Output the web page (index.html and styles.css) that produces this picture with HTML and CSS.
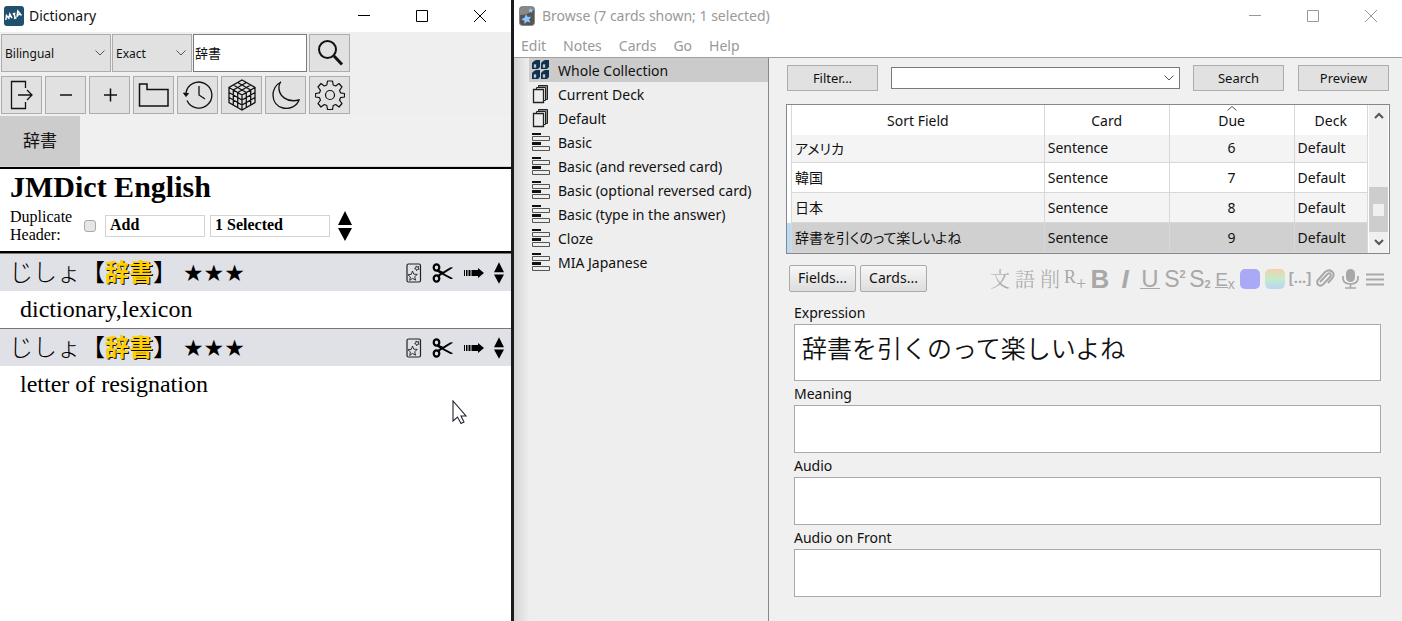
FILE: index.html
```html
<!DOCTYPE html>
<html lang="en">
<head>
<meta charset="utf-8">
<title>Dictionary and card browser</title>
<link rel="stylesheet" href="styles.css">
</head>
<body>
<svg class="defs" aria-hidden="true">
  <symbol id="chevron" viewBox="0 0 10 6"><path d="M.5.5 5 5 9.5.5" fill="none" stroke="#555"/></symbol>
  <symbol id="deck" viewBox="0 0 20 20"><g fill="#eee" stroke="#222"><path d="M7.500 1.500h9v14h-9z" fill="#888"/><path d="M5.500 3.500h9v13h-9z"/><path d="M2.500 5.500h10v13h-10z" stroke-width="1.300"/></g></symbol>
  <symbol id="note" viewBox="0 0 20 20"><path d="M1 1h9v2H1zM1 10h9v3H1z" fill="#111"/><path d="M1.500 4.500h17v4h-17zM1.500 14.500h17v4h-17z" fill="#eee" stroke="#555"/></symbol>
  <symbol id="card" viewBox="0 0 16 20"><rect x="1" y="1" width="13.500" height="18" rx="1.500" fill="none" stroke="#222" stroke-width="1.200"/><path d="m6.500 8 1.300 3.200 3.500.2-2.600 2.300.9 3.500-3-1.800-2.900 2 .7-3.500-2.500-2.200 3.400-.4zM10 3l1.200 1 1.500-.6-.5 1.600 1 1.200-1.700.1-.9 1.400-.5-1.600-1.500-.5 1.400-.9z" fill="none" stroke="#222" stroke-width=".9"/></symbol>
  <symbol id="scissors" viewBox="0 0 22 20"><g fill="none" stroke="#000" stroke-width="2.200"><ellipse cx="4.500" cy="4.500" rx="2.800" ry="3.200"/><ellipse cx="4.500" cy="15.500" rx="2.800" ry="3.200"/></g><path d="m6 6.500 5 2.200 7-4.200q2-.8 3 .2l-9 5.800 9 4.800q-1 1.200-3 .5l-8-4.300-4 3-1-2 3-2-3-2z"/></symbol>
  <symbol id="arrow" viewBox="0 0 20 10"><path d="M0 2h1v6H0zM2 2h1.500v6H2zM4.500 2h2v6h-2zM7.500 2H14V0l6 5-6 5V8H7.500z"/></symbol>
  <symbol id="updown" viewBox="0 0 14 30"><path d="M7 0l7 14H0zM0 17h14L7 30z"/></symbol>
</svg>

<main class="desktop">
  <section class="dictionary">
    <header class="titlebar">
      <svg class="app-icon" width="20" height="20" viewBox="0 0 20 20"><rect width="20" height="20" rx="3" fill="#21506f"/><path d="m1.800 14 .7-4.500 2.300 2.700 1-4.200 2.200 4.200M10 7.500l1.200 4.500M8.800 8l2.500-.8M10 12.500l2.500-.8M13 11l.8-6 3.700 4.500M13.500 9l3-1" fill="none" stroke="#fff" stroke-width="1.500"/></svg>
      <h1 class="window-title">Dictionary</h1>
      <div class="window-controls">
        <button aria-label="Minimize"><svg width="12" height="12"><path d="M0 5.500h12"/></svg></button>
        <button aria-label="Maximize"><svg width="12" height="12"><path d="M.5.5h11v11H.5z"/></svg></button>
        <button aria-label="Close"><svg width="12" height="12"><path d="m0 0 12 12M12 0 0 12"/></svg></button>
      </div>
    </header>

    <div class="tools">
      <div class="search-row">
        <div class="select-wrap language"><select aria-label="Dictionary group"><option>Bilingual</option></select><svg width="10" height="6"><use href="#chevron"/></svg></div>
        <div class="select-wrap mode"><select aria-label="Search mode"><option>Exact</option></select><svg width="10" height="6"><use href="#chevron"/></svg></div>
        <input class="term" aria-label="Search term" value="辞書">
        <button class="tool" aria-label="Search"><svg width="30" height="30" viewBox="0 0 30 30"><circle cx="12.500" cy="11.500" r="8.500" stroke-width="2"/><path d="m19 18 8 8.500" stroke-width="3"/></svg></button>
      </div>
      <div class="button-row">
        <button class="tool" aria-label="Open sidebar"><svg width="30" height="30" viewBox="0 0 30 30"><path d="M18.500 8V1.500H4.500v27h14V22M11 15h14M20 10l5 5-5 5" stroke-width="1.300"/></svg></button>
        <button class="tool" aria-label="Smaller text"><svg width="30" height="30" viewBox="0 0 30 30"><path d="M9 15h12" stroke-width="1.500"/></svg></button>
        <button class="tool" aria-label="Larger text"><svg width="30" height="30" viewBox="0 0 30 30"><path d="M9 15h13M15.500 8.500v13" stroke-width="1.500"/></svg></button>
        <button class="tool" aria-label="Files"><svg width="32" height="30" viewBox="0 0 32 30"><path d="M1.500 26V4H9v5.500h21V26z" stroke-width="1.500"/></svg></button>
        <button class="tool" aria-label="History"><svg width="32" height="30" viewBox="0 0 32 30"><path d="M4 13A13 13 0 1 1 5 20.500M17 6v9l6 4" stroke-width="1.300"/><path d="m1.500 13 5 .5-2.500 3z" fill="#111"/></svg></button>
        <button class="tool" aria-label="Card builder"><svg width="30" height="32" viewBox="0 0 30 32"><path d="m15 1 13 7.500v15L15 31 2 23.500v-15zM2 8.500 15 16l13-7.500M15 16v15M6.300 11v15M10.700 13.500v15M19.300 13.500v15M23.700 11v15M2 13.500 15 21l13-7.500M2 18.500 15 26l13-7.500M6.300 6l13 7.500M10.700 3.500l13 7.500M23.700 6l-13 7.500M19.300 3.500l-13 7.500" stroke-width="1.300"/></svg></button>
        <button class="tool" aria-label="Night mode"><svg width="30" height="30" viewBox="0 0 30 30"><path d="M10 2C-1 7-1 25 12 28c7 1.500 14-2 16-8C16 23 7 16 8 6q.5-3 2-4z" stroke-width="1.300"/></svg></button>
        <button class="tool" aria-label="Settings"><svg width="30" height="30" viewBox="0 0 30 30"><circle cx="15" cy="15" r="4.500" stroke-width="1.200"/><path d="M12.500 1h5l.7 4 2.500 1 3.300-2.500L27 7l-2.500 3.300 1 2.500 4 .7v3.500l-4 .7-1 2.500L27 23.500 24 27l-3.300-2.500-2.500 1-.7 4h-5l-.7-4-2.500-1L6 27l-3-3.500 2.500-3.300-1-2.500-4-.7v-3.500l4-.7 1-2.500L3 7l3-3.500L9.300 6l2.500-1z" stroke-width="1.200" stroke-linejoin="round"/></svg></button>
      </div>
    </div>
    <nav class="tabs"><button class="tab">辞書</button></nav>

    <div class="results">
      <div class="source">
        <h2>JMDict English</h2>
        <div class="source-options">
          <label for="duplicate">Duplicate Header:</label>
          <input id="duplicate" type="checkbox">
          <button class="pick add">Add</button>
          <button class="pick selected">1 Selected</button>
          <svg class="jump" width="14" height="30"><use href="#updown"/></svg>
        </div>
      </div>
      <article class="entry">
        <header><span class="reading">じしょ【<b>辞書</b>】</span><span class="stars">★★★</span>
          <span class="actions"><svg width="16" height="20"><use href="#card"/></svg><svg width="22" height="20"><use href="#scissors"/></svg><svg width="20" height="10"><use href="#arrow"/></svg><svg width="10" height="22"><use href="#updown"/></svg></span></header>
        <p>dictionary,lexicon</p>
      </article>
      <article class="entry">
        <header><span class="reading">じしょ【<b>辞書</b>】</span><span class="stars">★★★</span>
          <span class="actions"><svg width="16" height="20"><use href="#card"/></svg><svg width="22" height="20"><use href="#scissors"/></svg><svg width="20" height="10"><use href="#arrow"/></svg><svg width="10" height="22"><use href="#updown"/></svg></span></header>
        <p>letter of resignation</p>
      </article>
      <svg class="pointer" width="16" height="24" viewBox="0 0 16 24"><path d="M1 1v20l4.500-4 3.500 6.500 3-1.500-3-6h5z" fill="#fff" stroke="#223" stroke-width="1.100"/></svg>
    </div>
  </section>

  <section class="browser">
    <header class="titlebar inactive">
      <svg class="app-icon" width="16" height="20" viewBox="0 0 16 20"><rect x=".5" y=".5" width="15" height="19" rx="3" fill="#555" stroke="#888"/><path d="M1 9Q8 9 15 4V3q0-2-2-2H3Q1 1 1 3z" fill="#888"/><path d="m7 8 1.600 3 3.400-.3-2 2.800 1.500 3-3.500-.9-2.400 2.400-.3-3.300-3-1.500 3.200-1.500zM11.500 2l.8 1.500 1.700.2-1 1.300.3 1.700-1.600-.8-1.500.7.200-1.700-1-1.200 1.600-.3z" fill="#8ccaff"/></svg>
      <h1 class="window-title">Browse (7 cards shown; 1 selected)</h1>
      <div class="window-controls">
        <button aria-label="Minimize"><svg width="12" height="12"><path d="M0 5.500h12"/></svg></button>
        <button aria-label="Maximize"><svg width="12" height="12"><path d="M.5.5h11v11H.5z"/></svg></button>
        <button aria-label="Close"><svg width="12" height="12"><path d="m0 0 12 12M12 0 0 12"/></svg></button>
      </div>
    </header>
    <nav class="menubar"><a href="#">Edit</a><a href="#">Notes</a><a href="#">Cards</a><a href="#">Go</a><a href="#">Help</a></nav>

    <div class="workspace">
      <aside class="sidebar">
        <ul>
          <li class="current"><svg width="20" height="20" viewBox="0 0 20 20"><g fill="#12314c"><path d="m3 1 2-1h4v7L7 9H1V3zM12 1l2-1h4v7l-2 2h-6V3zM3 11l2-1h4v7l-2 2H1v-6zM12 11l2-1h4v7l-2 2h-6v-6z"/></g><path d="M2.500 4h3v4h-3zM11.500 4h3v4h-3zM2.500 14h3v4h-3zM11.500 14h3v4h-3z" fill="#b9ccdc" stroke="#12314c" stroke-width=".7"/></svg><span>Whole Collection</span></li>
          <li><svg width="20" height="20"><use href="#deck"/></svg><span>Current Deck</span></li>
          <li><svg width="20" height="20"><use href="#deck"/></svg><span>Default</span></li>
          <li><svg width="20" height="20"><use href="#note"/></svg><span>Basic</span></li>
          <li><svg width="20" height="20"><use href="#note"/></svg><span>Basic (and reversed card)</span></li>
          <li><svg width="20" height="20"><use href="#note"/></svg><span>Basic (optional reversed card)</span></li>
          <li><svg width="20" height="20"><use href="#note"/></svg><span>Basic (type in the answer)</span></li>
          <li><svg width="20" height="20"><use href="#note"/></svg><span>Cloze</span></li>
          <li><svg width="20" height="20"><use href="#note"/></svg><span>MIA Japanese</span></li>
        </ul>
      </aside>

      <div class="content">
        <div class="filter-row">
          <button class="push">Filter...</button>
          <div class="select-wrap query"><select aria-label="Search query"><option></option></select><svg width="10" height="6"><use href="#chevron"/></svg></div>
          <button class="push">Search</button>
          <button class="push preview">Preview</button>
        </div>

        <div class="card-list">
          <table>
            <colgroup><col class="c-mark"><col class="c-sort"><col class="c-card"><col class="c-due"><col class="c-deck"></colgroup>
            <thead><tr><th></th><th>Sort Field</th><th>Card</th><th class="sorted">Due<svg width="10" height="5" viewBox="0 0 10 5"><path d="M.5 4.500 5 .5l4.500 4" fill="none" stroke="#555"/></svg></th><th>Deck</th></tr></thead>
            <tbody>
              <tr class="partial"><td></td><td class="ja">アメリカ</td><td>Sentence</td><td class="num">6</td><td>Default</td></tr>
              <tr><td></td><td class="ja">韓国</td><td>Sentence</td><td class="num">7</td><td>Default</td></tr>
              <tr><td></td><td class="ja">日本</td><td>Sentence</td><td class="num">8</td><td>Default</td></tr>
              <tr class="chosen"><td></td><td class="ja">辞書を引くのって楽しいよね</td><td>Sentence</td><td class="num">9</td><td>Default</td></tr>
            </tbody>
          </table>
          <div class="scrollbar">
            <svg width="10" height="7" viewBox="0 0 10 7"><path d="m1 6 4-4 4 4"/></svg>
            <div class="track"><div class="thumb"></div></div>
            <svg width="10" height="7" viewBox="0 0 10 7"><path d="m1 1 4 4 4-4"/></svg>
          </div>
        </div>

        <div class="editor-bar">
          <button class="soft">Fields...</button><button class="soft">Cards...</button>
          <div class="format">
            <button class="kanji">文</button><button class="kanji">語</button><button class="kanji">削</button>
            <button class="furi">R<sub>+</sub></button>
            <button class="bold">B</button><button class="italic">I</button><button class="under">U</button>
            <button class="script">S<sup>2</sup></button><button class="script">S<sub>2</sub></button><button class="script clear"><span>E</span><sub>x</sub></button>
            <button class="swatch" aria-label="Text colour"></button><button class="swatch rainbow" aria-label="Change colour"></button>
            <button class="cloze">[...]</button>
            <button aria-label="Attach"><svg width="20" height="20" viewBox="0 0 20 20"><path d="m5 13 7.500-8q2-1.500 3 0t-.5 3L8 15.500q-2.500 2-4.500.5t-1-4.500L10 3q4-3 7-.5t.5 6.500L13 14" stroke-width="2"/></svg></button>
            <button aria-label="Record"><svg width="20" height="20" viewBox="0 0 20 20"><rect x="6" y="0" width="9" height="13" rx="4.500" fill="#a8a8a8" stroke="none"/><path d="M3 7v3q1 5 7.500 5T18 10V7M10.500 15v4M5 19h11" stroke-width="1.700"/></svg></button>
            <button aria-label="More"><svg width="20" height="20" viewBox="0 0 20 20"><path d="M1 5.500h18M1 10.500h18M1 15.500h18" stroke-width="2"/></svg></button>
          </div>
        </div>

        <form class="fields">
          <label for="expression">Expression</label><input id="expression" class="large" value="辞書を引くのって楽しいよね">
          <label for="meaning">Meaning</label><input id="meaning">
          <label for="audio">Audio</label><input id="audio">
          <label for="front">Audio on Front</label><input id="front">
        </form>
      </div>
    </div>
  </section>
</main>
</body>
</html>
```
FILE: styles.css
```css
* { box-sizing: border-box; }
body {
  margin: 0;
  background: #f0f0f0;
  color: #111;
  font: 14px/20px "Noto Sans", "Noto Sans CJK JP", sans-serif;
}
button, input, select { margin: 0; color: inherit; font: inherit; border-radius: 0; }
button { padding: 0; }
svg { display: block; flex: none; }
h1, h2, p, ul { margin: 0; padding: 0; }
.defs { position: absolute; width: 0; height: 0; }

.desktop { display: grid; grid-template-columns: 514fr 888fr; min-height: 100vh; }
.dictionary { display: flex; flex-direction: column; min-width: 0; border-right: 3px solid #1b1b1e; }
.browser { display: flex; flex-direction: column; min-width: 0; }

/* Window frames */
.titlebar { display: flex; align-items: center; height: 32px; padding: 0 2px 0 4px; background: #fff; }
.window-title { margin-left: 5px; font-size: 14px; font-weight: 400; white-space: nowrap; }
.window-controls { display: flex; margin-left: auto; }
.window-controls button { display: grid; place-items: center; width: 58px; height: 32px; border: 0; background: none; }
.window-controls path { fill: none; stroke: #000; }
.inactive { padding-left: 5px; color: #999; }
.inactive .window-title { margin-left: 7px; }
.inactive .window-controls path { stroke: #999; }

/* Dictionary toolbar */
.tools { display: grid; gap: 4px; padding: 2px 1px; background: #efefef; }
.search-row { display: flex; gap: 1px; }
.button-row { display: flex; gap: 3px; }
.select-wrap { display: grid; align-items: center; }
.select-wrap select, .select-wrap svg { grid-area: 1 / 1; }
.select-wrap svg { justify-self: end; margin-right: 6px; pointer-events: none; }
.select-wrap select { width: 100%; height: 38px; padding: 2px 3px 0; border: 1px solid #adadad; background: #e1e1e1; font-size: 12px; appearance: none; }
.language { width: 110px; }
.mode { width: 80px; }
.term { width: 114px; height: 38px; padding: 0 1px 2px; border: 1px solid #7a7a7a; background: #fff; font-size: 13px; }
.tool { display: grid; place-items: center; width: 41px; height: 38px; border: 1px solid #adadad; background: #e1e1e1; }
.tool svg { fill: none; stroke: #111; }
.search-row .tool { margin-left: 1px; }
.tabs { height: 51px; border-bottom: 1px solid #d9d9d9; }
.tab { width: 80px; height: 50px; border: 0; background: #ccc; font-size: 17px; }

/* Dictionary results */
.results { position: relative; flex: 1; background: #fff; color: #000; font-family: "Liberation Serif", "Noto Sans CJK JP", serif; }
.source { height: 86px; padding: 1px 10px 0; border-top: 2px solid #000; border-bottom: 2px solid #000; }
.source h2 { font-size: 30px; line-height: 33px; }
.source-options { display: flex; align-items: center; height: 46px; }
.source-options label { width: 74px; font-size: 16px; line-height: 18px; }
.source-options input { width: 12px; height: 12px; border: 1px solid #aaa; border-radius: 3px; background: #e6e6e6; appearance: none; }
.pick { height: 22px; padding: 0 4px 2px; border: 1px solid #d3d3d3; background: #fff; font-size: 16px; font-weight: 700; line-height: 18px; text-align: left; }
.add { width: 100px; margin-left: 9px; }
.selected { width: 120px; margin-left: 5px; }
.jump { margin-left: 8px; }
.entry { border-top: 1px solid #777; }
.entry header { display: flex; align-items: center; height: 37px; padding: 0 7px 0 9px; background: #e0e1e6; line-height: 36px; }
.reading { padding-bottom: 4px; font-family: "Noto Sans CJK JP", sans-serif; font-size: 24px; line-height: 32px; font-weight: 300; }
.reading b { color: #ffd000; font-weight: 700; text-shadow: 1px 1px #000; }
.stars { margin-left: 6px; font: 23px/36px "DejaVu Sans", sans-serif; }
.actions { display: flex; align-items: center; gap: 10px; margin-left: auto; }
.entry p { height: 37px; padding-left: 20px; font-size: 24px; line-height: 37px; }
.pointer { position: absolute; left: 452px; top: 233px; }

/* Browser */
.menubar { display: flex; gap: 17px; height: 26px; padding: 4px 7px 0; border-bottom: 1px solid #a0a0a0; background: #fff; }
.menubar a { color: #999; text-decoration: none; }
.workspace { display: grid; grid-template-columns: 255px 1fr; flex: 1; }
.sidebar { padding-left: 15px; border-right: 1px solid #828790; background: linear-gradient(90deg, #d4d4d4, #eee 15px); }
.sidebar ul { list-style: none; }
.sidebar li { display: flex; align-items: center; gap: 7px; height: 24px; padding-left: 2px; white-space: nowrap; }
.sidebar span { padding-top: 2px; }
.sidebar .current { background: #cbcbcb; }
.content { min-width: 0; padding: 7px 12px 0 17px; }

.filter-row { display: flex; align-items: center; padding: 0 1px; }
.push { width: 91px; height: 26px; border: 1px solid #adadad; background: #e1e1e1; font-size: 13px; }
.query { flex: 1; margin: 0 13px; }
.query select { height: 22px; border-color: #7a7a7a; background: #fff; }
.preview { margin-left: 14px; }

.card-list { display: flex; height: 150px; margin-top: 13px; overflow: hidden; border: 1px solid #828790; background: #fff; }
table { flex: 1; table-layout: fixed; border-collapse: separate; border-spacing: 0; }
.c-mark { width: 5px; }
.c-sort { width: 43.5%; }
.c-card, .c-due { width: 21.5%; }
th, td { height: 30px; padding: 0 3px; border-right: 1px solid #d8d8d8; border-bottom: 1px solid #d8d8d8; white-space: nowrap; overflow: hidden; }
th { padding-top: 2px; border-bottom: 0; font-weight: 400; }
td { text-align: left; }
.partial td { height: 28px; padding-bottom: 2px; }
td:first-child { border-bottom: 0; padding: 0; }
th:first-child { padding: 0; }
tr:nth-child(odd) td:not(:first-child) { background: #f4f4f4; }
tr.chosen td:not(:first-child) { background: #d0d0d0; }
.chosen td:first-child { background: #b9dcf5; }
.sorted { position: relative; }
.sorted svg { position: absolute; top: 1px; left: 50%; margin-left: -5px; }
.num { text-align: center; }
td.ja { padding-bottom: 2px; font: 14px/20px "Noto Sans CJK JP", sans-serif; font-feature-settings: "palt"; }
.scrollbar { display: flex; flex-direction: column; align-items: center; width: 19px; margin: 0 1px; padding: 7px 0; background: #f0f0f0; }
.scrollbar path { fill: none; stroke: #555; stroke-width: 2; }
.track { display: flex; align-items: flex-end; flex: 1; width: 100%; padding-bottom: 7px; }
.thumb { width: 100%; height: 45px; border: solid #cdcdcd; border-width: 17px 4px 16px; background: #f0f0f0; }

.editor-bar { display: flex; align-items: center; gap: 4px; height: 50px; padding: 0 5px 2px 3px; }
.soft { width: 67px; height: 27px; border: 1px solid #aaa; border-radius: 2px; background: linear-gradient(#f7f7f7, #ddd); }
.format { display: flex; gap: 5px; margin-left: auto; padding-top: 2px; }
.format button { display: flex; align-items: center; justify-content: center; width: 20px; height: 20px; border: 0; background: none; color: #a8a8a8; white-space: nowrap; }
.format svg { fill: none; stroke: #a8a8a8; }
.format sub, .format sup { font-size: 12px; line-height: 10px; }
.format sub { align-self: flex-end; }
.format sup { align-self: flex-start; }
.format .kanji { font: 20px/20px "Noto Serif CJK JP", "Noto Sans CJK JP", sans-serif; font-weight: 300; }
.format .furi { align-items: flex-start; font: 18px/16px "Liberation Serif", serif; }
.format .furi sub { font-size: 18px; }
.format .bold { font: 700 26px/20px "Liberation Sans", sans-serif; }
.format .italic { font: italic 700 26px/20px "Liberation Sans", sans-serif; }
.format .under { border-bottom: 1px solid #a8a8a8; font: 24px/20px "Liberation Sans", sans-serif; }
.format .script { font: 23px/20px "Liberation Sans", sans-serif; }
.format .script sup, .format .script sub { font-size: 11px; font-weight: 700; }
.format .clear span { height: 17px; border-bottom: 1px solid #a8a8a8; font-size: 19px; line-height: 17px; }
.format .clear sub { font-size: 14px; font-weight: 400; }
.format .swatch { border-radius: 5px; background: #a9a9f5; }
.format .rainbow { background: linear-gradient(#f3d0b0, #c4ecca 50%, #bcd4f5); }
.format .cloze { padding-bottom: 3px; font: 700 15px/18px "Liberation Sans", sans-serif; }

.fields { display: grid; padding: 0 9px 24px 8px; }
.fields label { height: 24px; padding-top: 3px; line-height: 20px; }
.fields label:first-child { height: 20px; padding-top: 0; line-height: 18px; }
.fields input { width: 100%; height: 48px; padding: 0 7px; border: 1px solid #a9a9a9; background: #fff; }
.fields .large { height: 57px; padding-bottom: 12px; font-family: "Noto Sans CJK JP", sans-serif; font-size: 25px; font-weight: 350; }
```
